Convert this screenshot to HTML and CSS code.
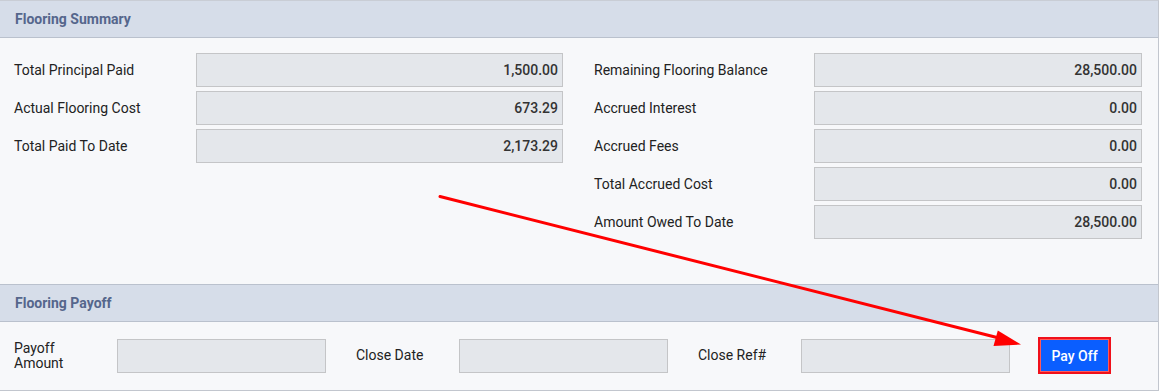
FILE: index.html
```html
<!DOCTYPE html>
<html lang="en">
<head>
<meta charset="utf-8">
<title>Flooring Summary</title>
<link rel="stylesheet" href="styles.css">
</head>
<body>
<div class="panel">
  <div class="panel-head">Flooring Summary</div>
  <div class="summary-body">
    <div class="col col-left">
      <div class="row"><div class="label">Total Principal Paid</div><div class="field">1,500.00</div></div>
      <div class="row"><div class="label">Actual Flooring Cost</div><div class="field">673.29</div></div>
      <div class="row"><div class="label">Total Paid To Date</div><div class="field">2,173.29</div></div>
    </div>
    <div class="col col-right">
      <div class="row"><div class="label">Remaining Flooring Balance</div><div class="field">28,500.00</div></div>
      <div class="row"><div class="label">Accrued Interest</div><div class="field">0.00</div></div>
      <div class="row"><div class="label">Accrued Fees</div><div class="field">0.00</div></div>
      <div class="row"><div class="label">Total Accrued Cost</div><div class="field">0.00</div></div>
      <div class="row"><div class="label">Amount Owed To Date</div><div class="field">28,500.00</div></div>
    </div>
  </div>
  <div class="panel-head panel-head-mid">Flooring Payoff</div>
  <div class="payoff-body">
    <div class="group"><div class="plabel">Payoff Amount</div><div class="pfield"></div></div>
    <div class="group"><div class="plabel">Close Date</div><div class="pfield"></div></div>
    <div class="group"><div class="plabel">Close Ref#</div><div class="pfield"></div></div>
    <button class="payoff-btn" type="button">Pay Off</button>
  </div>
  <svg class="annot" width="1159" height="391" viewBox="0 0 1159 391">
    <line x1="440" y1="196.5" x2="997" y2="337.5" stroke="#ff0000" stroke-width="3" stroke-linecap="round"/>
    <polygon points="1021,344.5 993.5,346 997.8,330.5" fill="#ff0000"/>
  </svg>
</div>
</body>
</html>
```

FILE: styles.css
```css
* { box-sizing: border-box; }
html, body { margin: 0; padding: 0; }
body {
  font-family: Roboto, "Noto Sans", "Liberation Sans", sans-serif;
  font-size: 14px;
  color: #222;
  background: #ffffff;
}
.panel {
  position: relative;
  width: 1159px;
  height: 391px;
  border-top: 1px solid #c9cdd5;
  border-right: 1px solid #c2c6ce;
  border-bottom: 1px solid #c2c6ce;
  background: #f7f8fa;
}
.panel-head {
  height: 37px;
  background: #d6dde9;
  border-bottom: 1px solid #bac1cd;
  padding-left: 15px;
  display: flex;
  align-items: center;
  font-weight: 700;
  font-size: 14px;
  color: #55668c;
}
.panel-head-mid {
  height: 38px;
  border-top: 1px solid #bac1cd;
}
.summary-body {
  display: flex;
  gap: 31px;
  padding: 15px 15px 45px 14px;
  height: 246px;
}
.col {
  display: flex;
  flex-direction: column;
  gap: 4px;
}
.col-left { width: 549px; }
.col-right { width: 548px; }
.row {
  display: flex;
  align-items: center;
  height: 34px;
}
.col-left .label { width: 182px; }
.col-right .label { width: 220px; }
.label { flex: none; }
.field {
  flex: 1;
  height: 34px;
  background: #e4e7eb;
  border: 1px solid #c4c5c7;
  display: flex;
  align-items: center;
  justify-content: flex-end;
  padding-right: 4px;
  font-weight: 500;
  color: #333;
}
.payoff-body {
  display: flex;
  align-items: center;
  gap: 30px;
  padding: 15px 0 15px 14px;
  height: 67px;
}
.group {
  display: flex;
  align-items: center;
  width: 312px;
}
.plabel {
  width: 103px;
  flex: none;
  padding-right: 18px;
  line-height: 15px;
}
.pfield {
  width: 209px;
  height: 34px;
  background: #e4e7eb;
  border: 1px solid #c4c5c7;
}
.payoff-btn {
  margin-left: -2px;
  width: 73px;
  height: 37px;
  background: #0a5eff;
  border: 2px solid #f0101a;
  outline: 1px solid #ff5a5a;
  outline-offset: -3px;
  color: #fff;
  font-family: Roboto, "Noto Sans", sans-serif;
  font-size: 14px;
  font-weight: 500;
  padding: 0;
}
.annot {
  position: absolute;
  left: 0;
  top: -1px;
  pointer-events: none;
}
```
